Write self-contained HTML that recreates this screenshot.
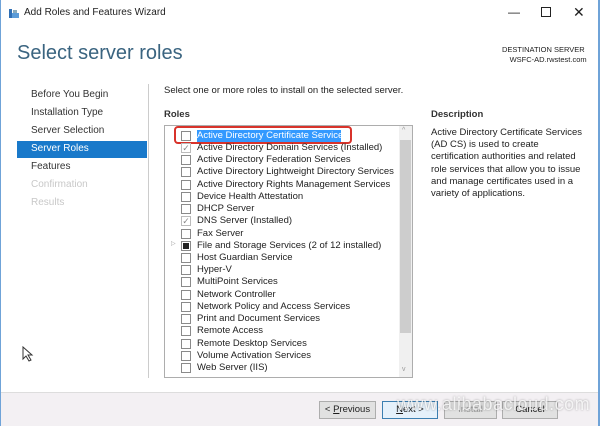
<!DOCTYPE html>
<html><head><style>
*{margin:0;padding:0;box-sizing:border-box}
body{width:600px;height:426px;overflow:hidden;background:#fff;font-family:"Liberation Sans",sans-serif;font-size:9.5px;color:#1e1e1e;position:relative}
.a{position:absolute;white-space:nowrap}
.nav{left:31px;font-size:10px;color:#333}
.it{position:absolute;left:181px;height:12px;line-height:12px;font-size:9.5px;white-space:nowrap}
.cb{position:absolute;left:0;top:1px;width:10px;height:10px;border:1px solid #8a8a8a;background:#fff}
.it span.t{position:absolute;left:16px;top:0}
.btn{position:absolute;top:401px;height:18px;border:1px solid #adadad;background:#e1e1e1;font-size:9.5px;text-align:center;line-height:16px}
</style></head><body>
<div class="a" style="left:0;top:0;width:1px;height:426px;background:#6fa3d8"></div>
<div class="a" style="left:598px;top:0;width:2px;height:426px;background:#6fa3d8"></div>
<svg class="a" style="left:8px;top:7px" width="12" height="12"><rect x="1" y="2" width="3" height="9" fill="#2f6fb5"/><rect x="4" y="6" width="7" height="5" fill="#5a9bd8"/><rect x="5" y="3" width="4" height="3" fill="#8ab"/></svg>
<div class="a" style="left:24px;top:7px;font-size:10px">Add Roles and Features Wizard</div>
<div class="a" style="left:508px;top:5px;font-size:12px">—</div>
<div class="a" style="left:541px;top:7px;width:10px;height:10px;border:1px solid #222"></div>
<div class="a" style="left:573px;top:4px;font-size:14px">✕</div>
<div class="a" style="left:17px;top:42px;font-size:20px;color:#3a6480;font-weight:300">Select server roles</div>
<div class="a" style="left:502px;top:45px;font-size:7.5px;text-align:right;line-height:10px">DESTINATION SERVER<br><span style="position:relative;left:2px">WSFC-AD.rwstest.com</span></div>
<div class="a nav" style="top:89px">Before You Begin</div>
<div class="a nav" style="top:107px">Installation Type</div>
<div class="a nav" style="top:125px">Server Selection</div>
<div class="a" style="left:17px;top:141px;width:130px;height:17px;background:#1979ca"></div>
<div class="a nav" style="top:143px;color:#fff">Server Roles</div>
<div class="a nav" style="top:161px">Features</div>
<div class="a nav" style="top:179px;color:#c8c8c8">Confirmation</div>
<div class="a nav" style="top:197px;color:#c8c8c8">Results</div>
<div class="a" style="left:148px;top:84px;width:1px;height:294px;background:#ccc"></div>
<div class="a" style="left:164px;top:85px">Select one or more roles to install on the selected server.</div>
<div class="a" style="left:164px;top:109px;font-weight:bold;color:#333">Roles</div>
<div class="a" style="left:164px;top:125px;width:249px;height:253px;border:1px solid #adadad"></div>
<div class="a" style="left:399px;top:126px;width:13px;height:251px;background:#f0f0f0"></div>
<div class="a" style="left:400px;top:140px;width:11px;height:193px;background:#cdcdcd"></div>
<div class="a" style="left:402px;top:127px;font-size:7px;color:#999">^</div>
<div class="a" style="left:402px;top:366px;font-size:7px;color:#999">v</div>
<div class="a" style="left:197px;top:130px;width:144px;height:12px;background:#3399ff"></div>
<div class="a" style="left:174px;top:126px;width:178px;height:18px;border:2px solid #d8332b;border-radius:4px"></div>
<div class="it" style="top:130px"><div class="cb"></div><span class="t" style="color:#fff">Active Directory Certificate Services</span></div>
<div class="it" style="top:142px"><div class="cb" style="border-color:#bbb;color:#888;font-size:9px;line-height:8px;text-align:center">✓</div><span class="t">Active Directory Domain Services (Installed)</span></div>
<div class="it" style="top:154px"><div class="cb"></div><span class="t">Active Directory Federation Services</span></div>
<div class="it" style="top:166px"><div class="cb"></div><span class="t">Active Directory Lightweight Directory Services</span></div>
<div class="it" style="top:179px"><div class="cb"></div><span class="t">Active Directory Rights Management Services</span></div>
<div class="it" style="top:191px"><div class="cb"></div><span class="t">Device Health Attestation</span></div>
<div class="it" style="top:203px"><div class="cb"></div><span class="t">DHCP Server</span></div>
<div class="it" style="top:215px"><div class="cb" style="border-color:#bbb;color:#888;font-size:9px;line-height:8px;text-align:center">✓</div><span class="t">DNS Server (Installed)</span></div>
<div class="it" style="top:228px"><div class="cb"></div><span class="t">Fax Server</span></div>
<div class="a" style="left:171px;top:240px;font-size:6px;color:#999">▷</div>
<div class="it" style="top:240px"><div class="cb"><div style="margin:1px;width:6px;height:6px;background:#222"></div></div><span class="t">File and Storage Services (2 of 12 installed)</span></div>
<div class="it" style="top:252px"><div class="cb"></div><span class="t">Host Guardian Service</span></div>
<div class="it" style="top:264px"><div class="cb"></div><span class="t">Hyper-V</span></div>
<div class="it" style="top:276px"><div class="cb"></div><span class="t">MultiPoint Services</span></div>
<div class="it" style="top:289px"><div class="cb"></div><span class="t">Network Controller</span></div>
<div class="it" style="top:301px"><div class="cb"></div><span class="t">Network Policy and Access Services</span></div>
<div class="it" style="top:313px"><div class="cb"></div><span class="t">Print and Document Services</span></div>
<div class="it" style="top:325px"><div class="cb"></div><span class="t">Remote Access</span></div>
<div class="it" style="top:338px"><div class="cb"></div><span class="t">Remote Desktop Services</span></div>
<div class="it" style="top:350px"><div class="cb"></div><span class="t">Volume Activation Services</span></div>
<div class="it" style="top:362px"><div class="cb"></div><span class="t">Web Server (IIS)</span></div>
<div class="a" style="left:431px;top:109px;font-weight:bold;color:#333">Description</div>
<div class="a" style="left:431px;top:127px;line-height:12.2px">Active Directory Certificate Services<br>(AD CS) is used to create<br>certification authorities and related<br>role services that allow you to issue<br>and manage certificates used in a<br>variety of applications.</div>
<svg class="a" style="left:22px;top:346px" width="12" height="16"><path d="M1 1 L1 13 L4 10 L7 15 L9 14 L6 9 L10 9 Z" fill="#fff" stroke="#333" stroke-width="1"/></svg>
<div class="a" style="left:1px;top:392px;width:597px;height:34px;background:#f3f0f3;border-top:1px solid #ddd"></div>
<div class="btn" style="left:319px;width:57px">&lt; <u>P</u>revious</div>
<div class="btn" style="left:382px;width:56px;border-color:#3c7fb1;background:#e5f1fb"><u>N</u>ext &gt;</div>
<div class="btn" style="left:444px;width:53px;color:#999">Install</div>
<div class="btn" style="left:502px;width:56px">Cancel</div>
<div class="a" style="left:397px;top:394px;font-size:18px;color:rgba(255,255,255,0.8);text-shadow:0 0 2px rgba(0,0,0,0.35);letter-spacing:0.5px">www.alibabacloud.com</div>
</body></html>
